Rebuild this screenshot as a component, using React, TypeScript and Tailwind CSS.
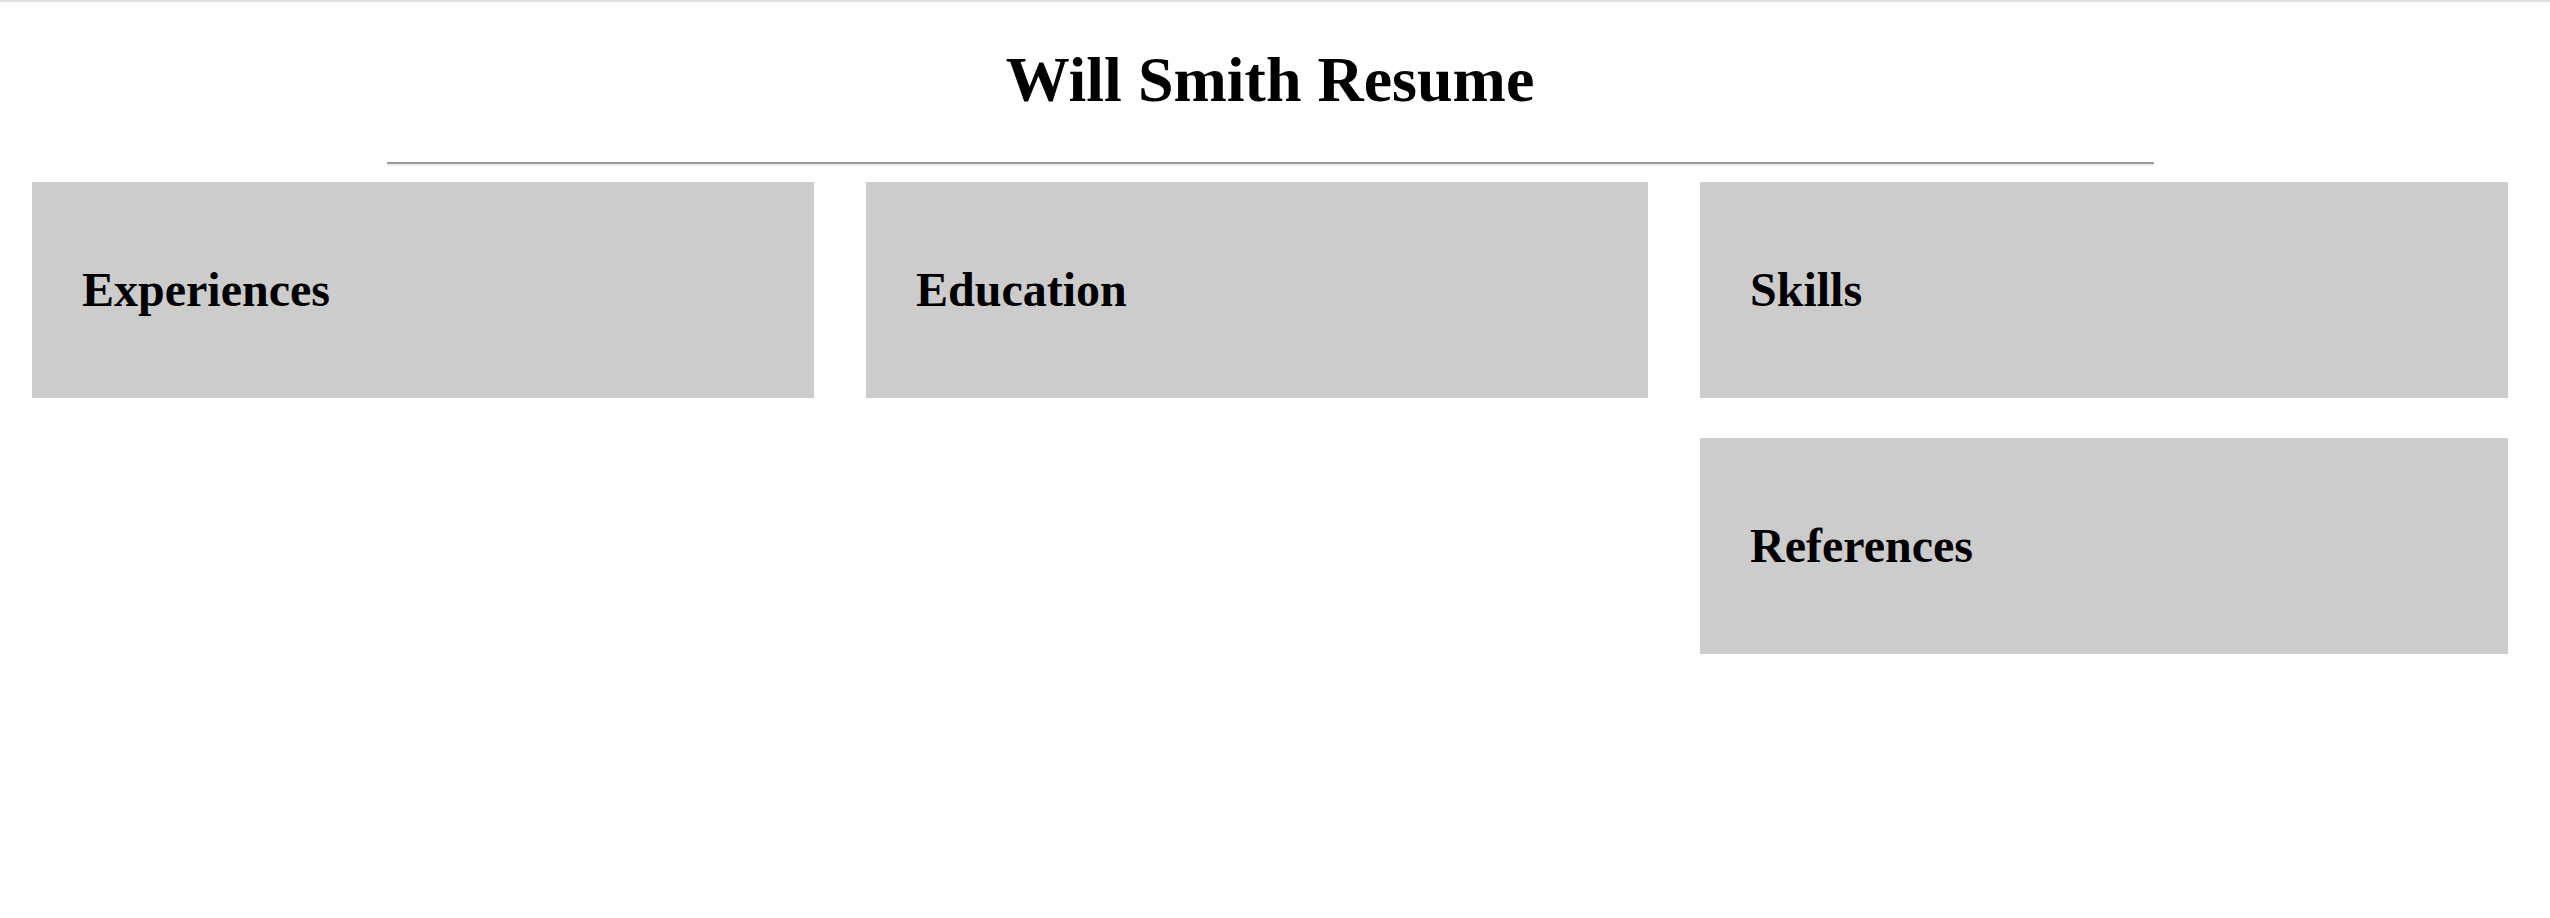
const serif = "font-['Liberation_Serif','Times_New_Roman',serif]";

function Section({ title }: { title: string }) {
  return (
    <div className="h-[216px] bg-[#cccccc] pl-[50px] pt-[80px]">
      <h2 className="text-[48px] leading-[56px] font-bold text-black">{title}</h2>
    </div>
  );
}

export default function App() {
  return (
    <div className={`${serif} min-h-[918px] w-[2550px] bg-white border-t-2 border-[#dedee3]`}>
      <div className="pl-[16px] pr-[26px] pt-[42px]">
        <h1 className="text-center text-[64px] leading-[72px] font-bold text-black">Will Smith Resume</h1>
        <hr className="mx-auto mt-[46px] h-[4px] w-[1767px] border-0 border-t-2 border-b-2 border-t-[#9a9a9a] border-b-[#ededed]" />
      </div>
      <div className="mt-[16px] grid grid-cols-[782px_782px_808px] items-start gap-x-[52px] pl-[32px]">
        <Section title="Experiences" />
        <Section title="Education" />
        <div className="flex flex-col gap-[40px]">
          <Section title="Skills" />
          <Section title="References" />
        </div>
      </div>
    </div>
  );
}
